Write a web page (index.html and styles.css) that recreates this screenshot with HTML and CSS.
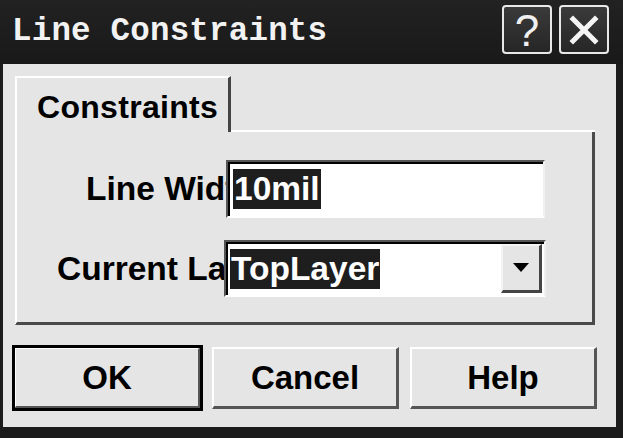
FILE: index.html
```html
<!DOCTYPE html>
<html>
<head>
<meta charset="utf-8">
<link rel="stylesheet" href="styles.css">
</head>
<body>
<div class="window">
  <div class="titlebar">
    <div class="title">Line Constraints</div>
    <div class="tbtns">
      <div class="tbtn"><span class="q">?</span></div>
      <div class="tbtn">
        <svg width="32" height="32" viewBox="0 0 32 32"><path d="M5 5 L27 27 M27 5 L5 27" stroke="#f4f4f4" stroke-width="5" stroke-linecap="square"/></svg>
      </div>
    </div>
  </div>
  <div class="client">
    <div class="tabs">
      <div class="tab">Constraints</div>
      <div class="tabfill"></div>
    </div>
    <div class="panel">
      <div class="row row1">
        <div class="label lw"><span>Line Width</span></div>
        <div class="edit"><span class="sel">10mil</span></div>
      </div>
      <div class="row row2">
        <div class="label cl"><span>Current Layer</span></div>
        <div class="combo">
          <span class="sel">TopLayer</span>
          <div class="drop"><svg width="16" height="10" viewBox="0 0 16 10"><path d="M0 0 H16 L8 9 Z" fill="#000"/></svg></div>
        </div>
      </div>
    </div>
    <div class="buttons">
      <div class="btn def">OK</div>
      <div class="btn">Cancel</div>
      <div class="btn">Help</div>
    </div>
  </div>
</div>
</body>
</html>
```

FILE: styles.css
```css
html, body {
  margin: 0;
  padding: 0;
  background: #1a1a1a;
}
.window {
  width: 623px;
  height: 438px;
  background: #1b1b1b;
  display: flex;
  flex-direction: column;
  overflow: hidden;
}
.titlebar {
  height: 64px;
  display: flex;
  align-items: flex-start;
  justify-content: space-between;
  background: linear-gradient(#222 0%, #191919 100%);
}
.title {
  font-family: "Liberation Mono", "DejaVu Sans Mono", monospace;
  font-weight: bold;
  font-size: 32.5px;
  color: #f2f2f2;
  margin: 13px 0 0 12px;
  letter-spacing: 0.2px;
}
.tbtns {
  display: flex;
  gap: 7px;
  margin: 5px 14px 0 0;
}
.tbtn {
  width: 46px;
  height: 45px;
  border: 2px solid #e8e8e8;
  border-radius: 4px;
  background: linear-gradient(#3a3a3a, #262626);
  display: flex;
  align-items: center;
  justify-content: center;
}
.q {
  font-family: "Liberation Sans", Arial, sans-serif;
  font-size: 44px;
  color: #f0f0f0;
  line-height: 1;
  margin-top: 2px;
}
.client {
  flex: 1;
  margin: 0 7px 11px 3px;
  background: #e5e5e5;
  padding: 12px 21px 0 12px;
  display: flex;
  flex-direction: column;
  font-family: "Liberation Sans", Arial, sans-serif;
  font-weight: bold;
  color: #000;
}
.tabs {
  display: flex;
  height: 56px;
}
.tab {
  width: 216px;
  box-sizing: border-box;
  border-top: 2px solid #fff;
  border-left: 2px solid #fff;
  border-right: 3px solid #444;
  font-size: 32px;
  padding: 11px 0 0 20px;
  letter-spacing: 0.3px;
}
.tabfill {
  flex: 1;
  border-bottom: 2px solid #fff;
}
.panel {
  height: 193px;
  box-sizing: border-box;
  border-left: 2px solid #fff;
  border-right: 3px solid #4a4a4a;
  border-bottom: 3px solid #4a4a4a;
  padding-top: 28px;
  display: flex;
  flex-direction: column;
  gap: 22px;
}
.row {
  display: flex;
  align-items: center;
}
.label {
  overflow: hidden;
  white-space: nowrap;
  font-size: 33.5px;
  box-sizing: border-box;
}
.lw {
  width: 209px;
  padding-left: 69px;
}
.cl {
  width: 207px;
  padding-left: 40px;
}
.edit, .combo {
  box-sizing: border-box;
  background: #fff;
  border-top: 2px solid #555;
  border-left: 2px solid #555;
  border-right: 2px solid #f0f0f0;
  border-bottom: 2px solid #fff;
  box-shadow: inset 2px 2px 0 #000;
  display: flex;
  align-items: center;
  font-size: 33.5px;
}
.edit {
  width: 319px;
  height: 58px;
  padding-left: 5px;
}
.combo {
  width: 322px;
  height: 57px;
  padding-left: 4px;
  position: relative;
}
.sel {
  background: #1e1e1e;
  color: #fff;
  line-height: 40px;
  height: 40px;
  padding: 0 1px;
}
.drop {
  position: absolute;
  right: 2px;
  top: 2px;
  width: 41px;
  height: 49px;
  box-sizing: border-box;
  background: #e5e5e5;
  border-top: 2px solid #f4f4f4;
  border-left: 2px solid #f4f4f4;
  border-right: 3px solid #444;
  border-bottom: 3px solid #444;
  display: flex;
  align-items: center;
  justify-content: center;
}
.buttons {
  display: flex;
  gap: 11px;
  margin-top: 22px;
  margin-right: -18px;
  margin-left: -1px;
}
.btn {
  width: 187px;
  height: 62px;
  box-sizing: border-box;
  border-top: 2px solid #fff;
  border-left: 2px solid #fff;
  border-right: 3px solid #555;
  border-bottom: 3px solid #555;
  display: flex;
  align-items: center;
  justify-content: center;
  font-size: 33px;
}
.btn.def {
  outline: 3px solid #000;
  outline-offset: -1px;
}
```
